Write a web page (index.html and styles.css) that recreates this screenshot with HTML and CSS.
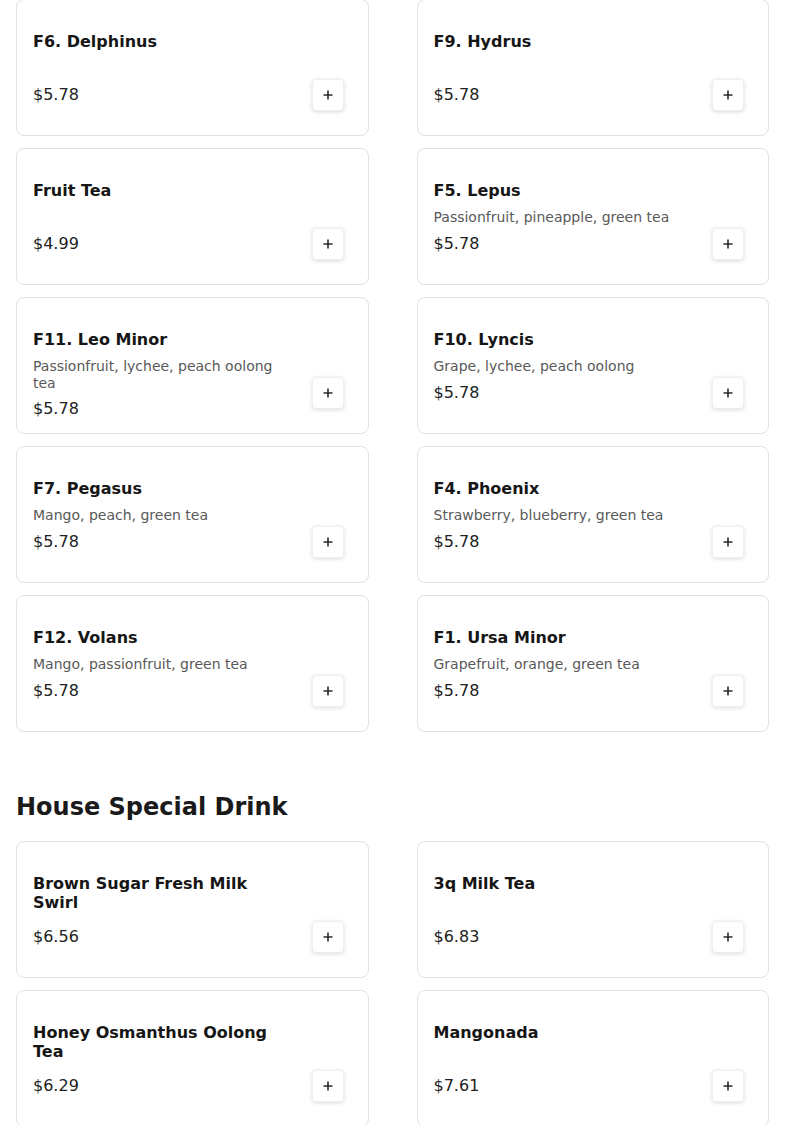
FILE: index.html
```html
<!DOCTYPE html>
<html lang="en">
<head>
    <meta charset="UTF-8">
    <meta name="viewport" content="width=device-width, initial-scale=1.0">
    <title>Menu</title>
    <link rel="stylesheet" href="styles.css">
</head>
<body>
    <main class="menu">
        <section class="category category-scrolled">
            <div class="item-grid">
                <article class="item-card">
                    <div class="item-info">
                        <div class="item-text"><h3 class="item-name">F6. Delphinus</h3></div>
                        <div class="item-price">$5.78</div>
                    </div>
                    <button class="add-btn" aria-label="Add"><svg viewBox="0 0 12 12" width="12" height="12"><path d="M6 1.5v9M1.5 6h9"/></svg></button>
                </article>
                <article class="item-card">
                    <div class="item-info">
                        <div class="item-text"><h3 class="item-name">F9. Hydrus</h3></div>
                        <div class="item-price">$5.78</div>
                    </div>
                    <button class="add-btn" aria-label="Add"><svg viewBox="0 0 12 12" width="12" height="12"><path d="M6 1.5v9M1.5 6h9"/></svg></button>
                </article>
                <article class="item-card">
                    <div class="item-info">
                        <div class="item-text"><h3 class="item-name">Fruit Tea</h3></div>
                        <div class="item-price">$4.99</div>
                    </div>
                    <button class="add-btn" aria-label="Add"><svg viewBox="0 0 12 12" width="12" height="12"><path d="M6 1.5v9M1.5 6h9"/></svg></button>
                </article>
                <article class="item-card">
                    <div class="item-info">
                        <div class="item-text">
                            <h3 class="item-name">F5. Lepus</h3>
                            <p class="item-desc">Passionfruit, pineapple, green tea</p>
                        </div>
                        <div class="item-price">$5.78</div>
                    </div>
                    <button class="add-btn" aria-label="Add"><svg viewBox="0 0 12 12" width="12" height="12"><path d="M6 1.5v9M1.5 6h9"/></svg></button>
                </article>
                <article class="item-card">
                    <div class="item-info">
                        <div class="item-text">
                            <h3 class="item-name">F11. Leo Minor</h3>
                            <p class="item-desc">Passionfruit, lychee, peach oolong tea</p>
                        </div>
                        <div class="item-price">$5.78</div>
                    </div>
                    <button class="add-btn" aria-label="Add"><svg viewBox="0 0 12 12" width="12" height="12"><path d="M6 1.5v9M1.5 6h9"/></svg></button>
                </article>
                <article class="item-card">
                    <div class="item-info">
                        <div class="item-text">
                            <h3 class="item-name">F10. Lyncis</h3>
                            <p class="item-desc">Grape, lychee, peach oolong</p>
                        </div>
                        <div class="item-price">$5.78</div>
                    </div>
                    <button class="add-btn" aria-label="Add"><svg viewBox="0 0 12 12" width="12" height="12"><path d="M6 1.5v9M1.5 6h9"/></svg></button>
                </article>
                <article class="item-card">
                    <div class="item-info">
                        <div class="item-text">
                            <h3 class="item-name">F7. Pegasus</h3>
                            <p class="item-desc">Mango, peach, green tea</p>
                        </div>
                        <div class="item-price">$5.78</div>
                    </div>
                    <button class="add-btn" aria-label="Add"><svg viewBox="0 0 12 12" width="12" height="12"><path d="M6 1.5v9M1.5 6h9"/></svg></button>
                </article>
                <article class="item-card">
                    <div class="item-info">
                        <div class="item-text">
                            <h3 class="item-name">F4. Phoenix</h3>
                            <p class="item-desc">Strawberry, blueberry, green tea</p>
                        </div>
                        <div class="item-price">$5.78</div>
                    </div>
                    <button class="add-btn" aria-label="Add"><svg viewBox="0 0 12 12" width="12" height="12"><path d="M6 1.5v9M1.5 6h9"/></svg></button>
                </article>
                <article class="item-card">
                    <div class="item-info">
                        <div class="item-text">
                            <h3 class="item-name">F12. Volans</h3>
                            <p class="item-desc">Mango, passionfruit, green tea</p>
                        </div>
                        <div class="item-price">$5.78</div>
                    </div>
                    <button class="add-btn" aria-label="Add"><svg viewBox="0 0 12 12" width="12" height="12"><path d="M6 1.5v9M1.5 6h9"/></svg></button>
                </article>
                <article class="item-card">
                    <div class="item-info">
                        <div class="item-text">
                            <h3 class="item-name">F1. Ursa Minor</h3>
                            <p class="item-desc">Grapefruit, orange, green tea</p>
                        </div>
                        <div class="item-price">$5.78</div>
                    </div>
                    <button class="add-btn" aria-label="Add"><svg viewBox="0 0 12 12" width="12" height="12"><path d="M6 1.5v9M1.5 6h9"/></svg></button>
                </article>
            </div>
        </section>

        <section class="category">
            <h2 class="category-title">House Special Drink</h2>
            <div class="item-grid">
                <article class="item-card">
                    <div class="item-info">
                        <div class="item-text"><h3 class="item-name">Brown Sugar Fresh Milk Swirl</h3></div>
                        <div class="item-price">$6.56</div>
                    </div>
                    <button class="add-btn" aria-label="Add"><svg viewBox="0 0 12 12" width="12" height="12"><path d="M6 1.5v9M1.5 6h9"/></svg></button>
                </article>
                <article class="item-card">
                    <div class="item-info">
                        <div class="item-text"><h3 class="item-name">3q Milk Tea</h3></div>
                        <div class="item-price">$6.83</div>
                    </div>
                    <button class="add-btn" aria-label="Add"><svg viewBox="0 0 12 12" width="12" height="12"><path d="M6 1.5v9M1.5 6h9"/></svg></button>
                </article>
                <article class="item-card">
                    <div class="item-info">
                        <div class="item-text"><h3 class="item-name">Honey Osmanthus Oolong Tea</h3></div>
                        <div class="item-price">$6.29</div>
                    </div>
                    <button class="add-btn" aria-label="Add"><svg viewBox="0 0 12 12" width="12" height="12"><path d="M6 1.5v9M1.5 6h9"/></svg></button>
                </article>
                <article class="item-card">
                    <div class="item-info">
                        <div class="item-text"><h3 class="item-name">Mangonada</h3></div>
                        <div class="item-price">$7.61</div>
                    </div>
                    <button class="add-btn" aria-label="Add"><svg viewBox="0 0 12 12" width="12" height="12"><path d="M6 1.5v9M1.5 6h9"/></svg></button>
                </article>
            </div>
        </section>
    </main>
</body>
</html>
```

FILE: styles.css
```css
body {
    margin: 0;
    font-family: "DejaVu Sans", Verdana, sans-serif;
    background-color: #fff;
    color: #1a1a1a;
}
.menu {
    padding: 0 16px 40px;
}
/* page is scrolled a little past the top of the first row */
.category-scrolled {
    margin-top: -1px;
}
.category-title {
    font-size: 24px;
    line-height: 28px;
    font-weight: bold;
    margin: 61px 0 20px;
    color: #1a1a1a;
}
.item-grid {
    display: grid;
    grid-template-columns: 1fr 1fr;
    column-gap: 48px;
    row-gap: 12px;
}
.item-card {
    display: flex;
    gap: 24px;
    height: 137px;
    box-sizing: border-box;
    padding: 32px 24px 24px 16px;
    border: 1px solid #e2e2e2;
    border-radius: 8px;
    background-color: #fff;
}
.item-info {
    flex: 1;
    min-width: 0;
}
.item-text {
    min-height: 46px;
}
.item-name {
    margin: 0;
    font-size: 16px;
    line-height: 19px;
    font-weight: bold;
    color: #161616;
}
.item-desc {
    margin: 9px 0 0;
    font-size: 14px;
    line-height: 17px;
    color: #595959;
}
.item-price {
    margin-top: 7px;
    font-size: 16px;
    line-height: 19px;
    color: #222;
}
.add-btn {
    align-self: flex-end;
    flex: none;
    width: 32px;
    height: 32px;
    padding: 0;
    display: flex;
    align-items: center;
    justify-content: center;
    background-color: #fff;
    border: 1px solid #efefef;
    border-radius: 4px;
    box-shadow: 0 1px 4px rgba(0, 0, 0, 0.14);
    cursor: pointer;
}
.add-btn svg {
    stroke: #2a2a2a;
    stroke-width: 1.6;
    fill: none;
}
```
